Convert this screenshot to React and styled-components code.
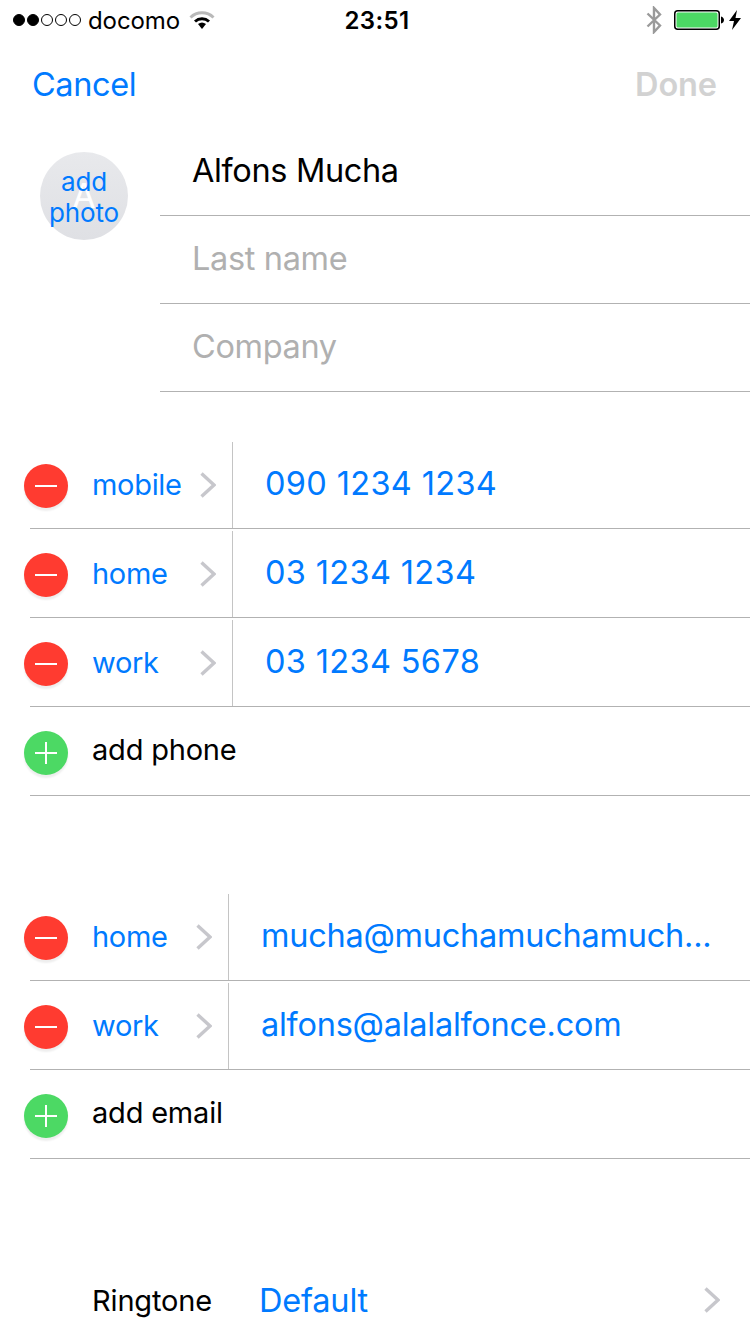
import React from "react";
import styled, { createGlobalStyle } from "styled-components";

const Global = createGlobalStyle`
    html, body {
        margin: 0;
        padding: 0;
        background: #fff;
    }
    body {
        font-family: Inter, "Liberation Sans", sans-serif;
        -webkit-font-smoothing: antialiased;
    }
`;

const BLUE = "#007aff";

const Screen = styled.div`
    width: 750px;
    height: 1334px;
    overflow: hidden;
    background: #fff;
    display: flex;
    flex-direction: column;
`;

const StatusBar = styled.div`
    height: 40px;
    display: grid;
    grid-template-columns: 1fr auto 1fr;
    align-items: center;
    padding: 0 9px 0 13px;
    flex-shrink: 0;
`;

const StatusLeft = styled.div`
    display: flex;
    align-items: center;
`;

const StatusRight = styled.div`
    display: flex;
    align-items: center;
    justify-content: flex-end;
`;

const Dots = styled.div`
    display: flex;
    gap: 2px;
    margin-right: 7px;
`;

const Dot = styled.span`
    width: 12px;
    height: 12px;
    box-sizing: border-box;
    border-radius: 50%;
    border: 1px solid #000;
    background: ${(p) => (p.$on ? "#000" : "transparent")};
`;

const Carrier = styled.span`
    font-size: 24px;
    letter-spacing: -0.1px;
    color: #000;
    margin-right: 9px;
`;

const Clock = styled.span`
    font-size: 24px;
    font-weight: 600;
    letter-spacing: 0.35px;
    color: #000;
`;

const NavBar = styled.div`
    height: 88px;
    display: flex;
    align-items: center;
    justify-content: space-between;
    padding: 0 33px 0 32px;
    box-sizing: border-box;
    flex-shrink: 0;
`;

const NavButton = styled.span`
    font-size: 32.5px;
    letter-spacing: ${(p) => (p.$bold ? "-0.1px" : "-0.4px")};
    font-weight: ${(p) => (p.$bold ? 600 : 400)};
    color: ${(p) => (p.$dim ? "#d2d2d2" : BLUE)};
`;

const NameSection = styled.div`
    display: flex;
    flex-shrink: 0;
`;

const AvatarColumn = styled.div`
    width: 160px;
    flex-shrink: 0;
    padding: 24px 0 0 40px;
    box-sizing: border-box;
`;

const Avatar = styled.div`
    position: relative;
    width: 88px;
    height: 88px;
    border-radius: 50%;
    background: linear-gradient(#e8e9ec, #dfe0e4);
    display: flex;
    align-items: center;
    justify-content: center;
`;

const AvatarInitial = styled.span`
    position: absolute;
    font-size: 34px;
    line-height: 1;
    color: #fff;
`;

const AvatarLabel = styled.span`
    position: relative;
    top: 1px;
    font-size: 26px;
    line-height: 31px;
    text-align: center;
    color: ${BLUE};
    letter-spacing: -0.15px;
`;

const NameFields = styled.div`
    flex: 1;
`;

const NameField = styled.div`
    height: 85px;
    border-bottom: 1px solid #b2b2b2;
    display: flex;
    align-items: center;
    padding: 0 0 2px 32px;
    font-size: 32.5px;
    letter-spacing: -0.35px;
    color: ${(p) => (p.$placeholder ? "#b0b0b0" : "#000")};
`;

const Group = styled.div`
    margin-top: ${(p) => p.$top}px;
    flex-shrink: 0;
`;

const RowWrap = styled.div`
    position: relative;
    height: 89px;
    display: flex;
    align-items: stretch;
    padding-left: 24px;
    box-sizing: border-box;
`;

const RowLine = styled.div`
    position: absolute;
    left: 30px;
    right: 0;
    bottom: 0;
    height: 1px;
    background: #b2b2b2;
`;

const Badge = styled.div`
    width: 44px;
    height: 44px;
    margin-top: 24px;
    border-radius: 50%;
    flex-shrink: 0;
    background: ${(p) => (p.$add ? "#4cd964" : "#ff3b30")};
    box-shadow: 0 3px 2px rgba(0, 0, 0, 0.07);
    display: flex;
    align-items: center;
    justify-content: center;
`;

const LabelCell = styled.div`
    width: ${(p) => p.$w}px;
    flex-shrink: 0;
    display: flex;
    align-items: center;
    padding-left: 24px;
    box-sizing: border-box;
    position: relative;
    font-size: 29px;
    letter-spacing: -0.3px;
    color: ${BLUE};
`;

const LabelChevron = styled.svg`
    position: absolute;
    right: 16px;
    top: 32px;
    width: 16px;
    height: 26px;
`;

const ValueCell = styled.div`
    flex: 1;
    min-width: 0;
    border-left: 1px solid #c4c4c4;
    margin: 2px 0 1px;
    padding: 0 0 4px 32px;
    display: flex;
    align-items: center;
    font-size: 32.5px;
    letter-spacing: ${(p) => p.$spacing}px;
    color: ${BLUE};
`;

const AddLabel = styled.div`
    display: flex;
    align-items: center;
    padding-left: 24px;
    padding-bottom: 4px;
    font-size: 29px;
    letter-spacing: -0.2px;
    color: #000;
`;

const RingtoneRow = styled.div`
    margin-top: 97px;
    height: 88px;
    flex-shrink: 0;
    display: flex;
    align-items: center;
    padding-left: 92px;
    padding-right: 30px;
`;

const RingtoneLabel = styled.span`
    font-size: 29px;
    letter-spacing: -0.15px;
    color: #000;
    width: 167px;
`;

const RingtoneValue = styled.span`
    flex: 1;
    font-size: 32.5px;
    letter-spacing: -0.2px;
    color: ${BLUE};
`;

const EndChevron = styled.svg`
    width: 16px;
    height: 26px;
`;

const Chevron = () => (
    <LabelChevron viewBox="0 0 16 26">
        <path d="M1.5 1.5 L14 13 L1.5 24.5" fill="none" stroke="#c7c7cc" strokeWidth="3.4" />
    </LabelChevron>
);

const Minus = () => (
    <svg width="22" height="22" viewBox="0 0 22 22">
        <rect x="0" y="10" width="22" height="2" fill="#fff" />
    </svg>
);

const Plus = () => (
    <svg width="22" height="22" viewBox="0 0 22 22">
        <rect x="0" y="10" width="22" height="2" fill="#fff" />
        <rect x="10" y="0" width="2" height="22" fill="#fff" />
    </svg>
);

const Wifi = () => (
    <svg width="26" height="20" viewBox="0 0 26 20">
        <path d="M1.5 7.5 A16.5 16.5 0 0 1 24.5 7.5" fill="none" stroke="#b9b9b9" strokeWidth="3" />
        <path d="M6 11.5 A10.5 10.5 0 0 1 20 11.5" fill="none" stroke="#000" strokeWidth="3" />
        <path d="M9 14 Q13 11 17 14 L13 19 Z" fill="#000" />
    </svg>
);

const Bluetooth = () => (
    <svg width="16" height="28" viewBox="0 0 16 28" style={{ marginRight: 12 }}>
        <path d="M1.5 7.5 L14 19.5 L8 26 L8 2 L14 8.5 L1.5 20.5" fill="none" stroke="#9a9a9a" strokeWidth="2.4" />
    </svg>
);

const Battery = () => (
    <svg width="50" height="20" viewBox="0 0 50 20">
        <rect x="0.75" y="0.75" width="44.5" height="18.5" rx="3" fill="#fff" stroke="#000" strokeWidth="1.5" />
        <rect x="2.5" y="2.5" width="41" height="15" rx="1.5" fill="#4cd964" />
        <path d="M47 6.5 C49 7 50 8.5 50 10 C50 11.5 49 13 47 13.5 Z" fill="#000" />
    </svg>
);

const Bolt = () => (
    <svg width="12" height="20" viewBox="0 0 12 20" style={{ marginLeft: 5 }}>
        <path d="M8 0 L0 11 L5 11 L3 20 L12 8 L6.5 8 Z" fill="#000" />
    </svg>
);

const FieldRow = ({ label, value, labelWidth, spacing }) => (
    <RowWrap>
        <Badge><Minus /></Badge>
        <LabelCell $w={labelWidth}>
            {label}
            <Chevron />
        </LabelCell>
        <ValueCell $spacing={spacing}>{value}</ValueCell>
        <RowLine />
    </RowWrap>
);

const AddRow = ({ label }) => (
    <RowWrap>
        <Badge $add><Plus /></Badge>
        <AddLabel>{label}</AddLabel>
        <RowLine />
    </RowWrap>
);

const phones = [
    { label: "mobile", value: "090 1234 1234" },
    { label: "home", value: "03 1234 1234" },
    { label: "work", value: "03 1234 5678" },
];

const emails = [
    { label: "home", value: "mucha@muchamuchamuch..." },
    { label: "work", value: "alfons@alalalfonce.com" },
];

export default function App() {
    return (
        <Screen>
            <Global />
            <StatusBar>
                <StatusLeft>
                    <Dots>
                        <Dot $on />
                        <Dot $on />
                        <Dot />
                        <Dot />
                        <Dot />
                    </Dots>
                    <Carrier>docomo</Carrier>
                    <Wifi />
                </StatusLeft>
                <Clock>23:51</Clock>
                <StatusRight>
                    <Bluetooth />
                    <Battery />
                    <Bolt />
                </StatusRight>
            </StatusBar>
            <NavBar>
                <NavButton>Cancel</NavButton>
                <NavButton $bold $dim>Done</NavButton>
            </NavBar>
            <NameSection>
                <AvatarColumn>
                    <Avatar>
                        <AvatarInitial>A</AvatarInitial>
                        <AvatarLabel>add<br />photo</AvatarLabel>
                    </Avatar>
                </AvatarColumn>
                <NameFields>
                    <NameField>Alfons Mucha</NameField>
                    <NameField $placeholder>Last name</NameField>
                    <NameField $placeholder>Company</NameField>
                </NameFields>
            </NameSection>
            <Group $top={48}>
                {phones.map((p) => (
                    <FieldRow key={p.label} label={p.label} value={p.value} labelWidth={164} spacing={0.35} />
                ))}
                <AddRow label="add phone" />
            </Group>
            <Group $top={96}>
                {emails.map((p) => (
                    <FieldRow key={p.label} label={p.label} value={p.value} labelWidth={160} spacing={-0.25} />
                ))}
                <AddRow label="add email" />
            </Group>
            <RingtoneRow>
                <RingtoneLabel>Ringtone</RingtoneLabel>
                <RingtoneValue>Default</RingtoneValue>
                <EndChevron viewBox="0 0 16 26">
                    <path d="M1.5 1.5 L14 13 L1.5 24.5" fill="none" stroke="#c7c7cc" strokeWidth="3.4" />
                </EndChevron>
            </RingtoneRow>
        </Screen>
    );
}
